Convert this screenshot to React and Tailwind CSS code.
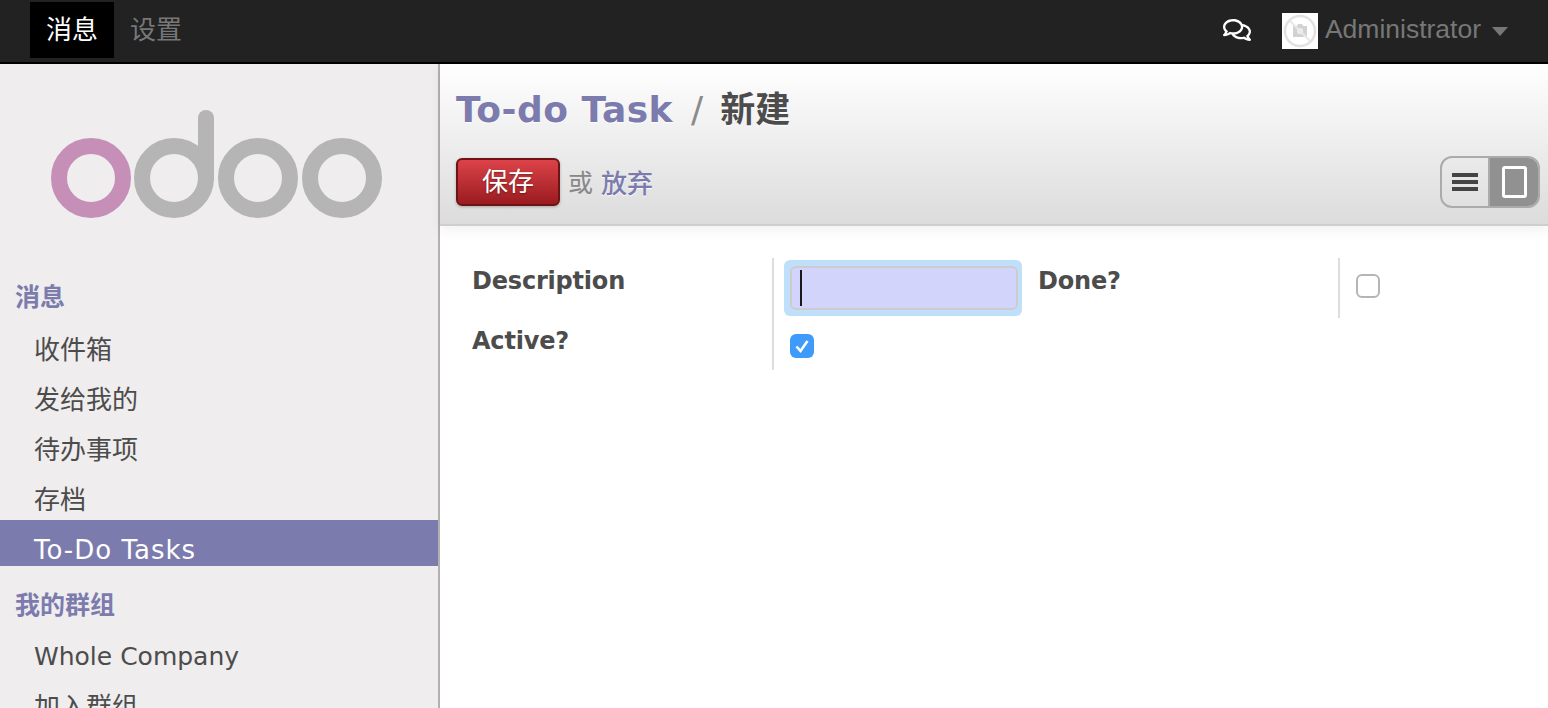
import { FaRegComments } from "react-icons/fa";

const ui = "font-['DejaVu_Sans','Noto_Sans_CJK_SC',sans-serif]";

function Logo() {
  return (
    <svg width="336" height="112" viewBox="0 0 336 112" className="block blur-[0.6px]">
      <g fill="none" strokeWidth="16">
        <circle cx="41" cy="68" r="32" stroke="#c58fb8" />
        <circle cx="124" cy="68" r="32" stroke="#b5b5b5" />
        <circle cx="208" cy="68" r="32" stroke="#b5b5b5" />
        <circle cx="292" cy="68" r="32" stroke="#b5b5b5" />
        <path d="M156 8V68" stroke="#b5b5b5" strokeLinecap="round" />
      </g>
    </svg>
  );
}

function NoPhoto() {
  return (
    <div className="mt-[2px] w-9 h-9 bg-white flex items-center justify-center">
      <svg width="34" height="34" viewBox="0 0 34 34">
        <circle cx="17" cy="17" r="15" fill="none" stroke="#e2e2e2" strokeWidth="2.5" />
        <path d="M10 12h4l1-2h4l1 2h4v11H10z" fill="#d2d2d2" />
        <circle cx="17" cy="17" r="3" fill="#efefef" />
        <path d="M7 7l20 20" stroke="#e8e8e8" strokeWidth="2" />
      </svg>
    </div>
  );
}

function SideHead({ children, className = "" }) {
  return <div className={`pl-[15px] text-[25px] font-semibold leading-[46px] text-[#7c7bad] ${className}`}>{children}</div>;
}

function SideItem({ children, active, className = "text-[26px]" }) {
  return (
    <div
      className={`h-[46px] mb-1 pl-[34px] pt-[7px] leading-[46px] whitespace-nowrap ${className} ${
        active ? "bg-[#7c7bad] text-white" : "text-[#4c4c4c]"
      }`}
    >
      {children}
    </div>
  );
}

function FieldLabel({ children }) {
  return <div className="pt-[5px] text-[24px] font-bold tracking-[-0.2px] leading-[36px] text-[#4c4c4c]">{children}</div>;
}

export default function App() {
  return (
    <div className={`h-screen overflow-hidden flex flex-col bg-white ${ui}`}>
      <nav className="h-16 shrink-0 flex items-start bg-[#222222] border-b-2 border-black pl-[30px]">
        <a className="mt-[2px] w-[84px] h-14 bg-black text-white text-[26px] flex items-center justify-center">消息</a>
        <a className="mt-[2px] ml-4 h-14 text-[#777777] text-[26px] flex items-center">设置</a>
        <div className="ml-auto mr-10 h-[60px] flex items-center font-['Liberation_Sans',sans-serif]">
          <FaRegComments className="text-white text-[28px] mr-[31px]" />
          <NoPhoto />
          <span className="ml-[7px] text-[26.5px] text-[#777777]">Administrator</span>
          <span className="ml-[11px] mt-[3px] border-x-8 border-t-[9px] border-x-transparent border-t-[#777777]" />
        </div>
      </nav>

      <div className="flex flex-1 min-h-0">
        <aside className="w-[440px] shrink-0 bg-[#efedee] border-r-2 border-[#b1b1b1] overflow-hidden">
          <div className="pt-[46px] pl-[50px] h-[210px]">
            <Logo />
          </div>
          <SideHead className="mt-px">消息</SideHead>
          <div className="-mt-px">
            <SideItem>收件箱</SideItem>
            <SideItem>发给我的</SideItem>
            <SideItem>待办事项</SideItem>
            <SideItem>存档</SideItem>
            <SideItem active className="text-[26px] tracking-[1px]">To-Do Tasks</SideItem>
          </div>
          <SideHead className="mt-[17px]">我的群组</SideHead>
          <div className="-mt-[2px]">
            <SideItem className="text-[25px]">Whole Company</SideItem>
            <SideItem>加入群组</SideItem>
          </div>
        </aside>

        <main className="flex-1 min-w-0">
          <header className="h-[162px] bg-gradient-to-b from-white to-[#dcdcdc] border-b-2 border-[#cfcfcf] shadow-[0_4px_12px_rgba(0,0,0,0.06)] pl-4 pr-2">
            <div className="pt-[23px] h-[94px] flex items-start text-[36px] font-bold leading-[46px] whitespace-nowrap [text-shadow:0_1px_1px_#fff]">
              <a className="text-[#7c7bad] tracking-[0.5px]">To-do Task</a>
              <span className="ml-[18px] text-[#8a8a8a] font-normal">/</span>
              <span className="ml-[17px] text-[#4c4c4c] text-[35px]">新建</span>
            </div>
            <div className="flex items-start justify-between">
              <div className="flex items-center">
                <button className="w-[104px] h-12 rounded-md border-2 border-[#6e1414] bg-gradient-to-b from-[#dc4349] to-[#9a1b20] text-white text-[26px] [text-shadow:0_1px_2px_rgba(0,0,0,0.4)] shadow-[0_1px_3px_rgba(0,0,0,0.25)]">
                  保存
                </button>
                <span className="ml-2 mt-1 text-[25px] text-[#888888]">或</span>
                <a className="ml-[8px] mt-1 text-[26px] font-medium text-[#7c7bad] [text-shadow:0_1px_1px_#fff]">放弃</a>
              </div>
              <div className="-mt-[2px] w-[100px] h-[52px] flex rounded-xl border-2 border-[#ababab] overflow-hidden">
                <div className="w-12 flex items-center justify-center border-r-2 border-[#ababab]">
                  <svg width="26" height="18" viewBox="0 0 26 18">
                    <path d="M0 0h26v4H0zM0 7h26v4H0zM0 14h26v4H0z" fill="#444444" />
                  </svg>
                </div>
                <div className="flex-1 bg-[#919191] flex items-center justify-center">
                  <div className="w-[25px] h-[32px] rounded-[3px] border-[3px] border-white" />
                </div>
              </div>
            </div>
          </header>

          <section className="pl-8 pt-8 grid grid-cols-[300px_266px_300px_1fr] grid-rows-[60px_52px]">
            <FieldLabel>Description</FieldLabel>
            <div className="border-l-2 border-[#dddddd] pl-[10px] pt-[2px]">
              <div className="w-[238px] h-14 rounded-md bg-[#bfdffb] pl-[6px] pr-1 py-[6px]">
                <div className="h-11 rounded-md border-2 border-[#cccccc] bg-[#d2d4fb] flex items-center pl-[8px]">
                  <span className="w-[2px] h-9 bg-[#1a1a1a]" />
                </div>
              </div>
            </div>
            <div>
              <FieldLabel>Done?</FieldLabel>
            </div>
            <div className="border-l-2 border-[#dddddd] pl-4 pt-4">
              <div className="w-6 h-6 rounded-md border-2 border-[#b5b5b5] bg-white" />
            </div>
            <FieldLabel>Active?</FieldLabel>
            <div className="border-l-2 border-[#dddddd] pl-4 pt-4">
              <div className="w-6 h-6 rounded-md bg-[#3f9bfb] flex items-center justify-center">
                <svg width="18" height="18" viewBox="0 0 18 18">
                  <path d="M3.5 9.5L7.5 14L14.5 4" fill="none" stroke="#fff" strokeWidth="2.6" />
                </svg>
              </div>
            </div>
          </section>
        </main>
      </div>
    </div>
  );
}
